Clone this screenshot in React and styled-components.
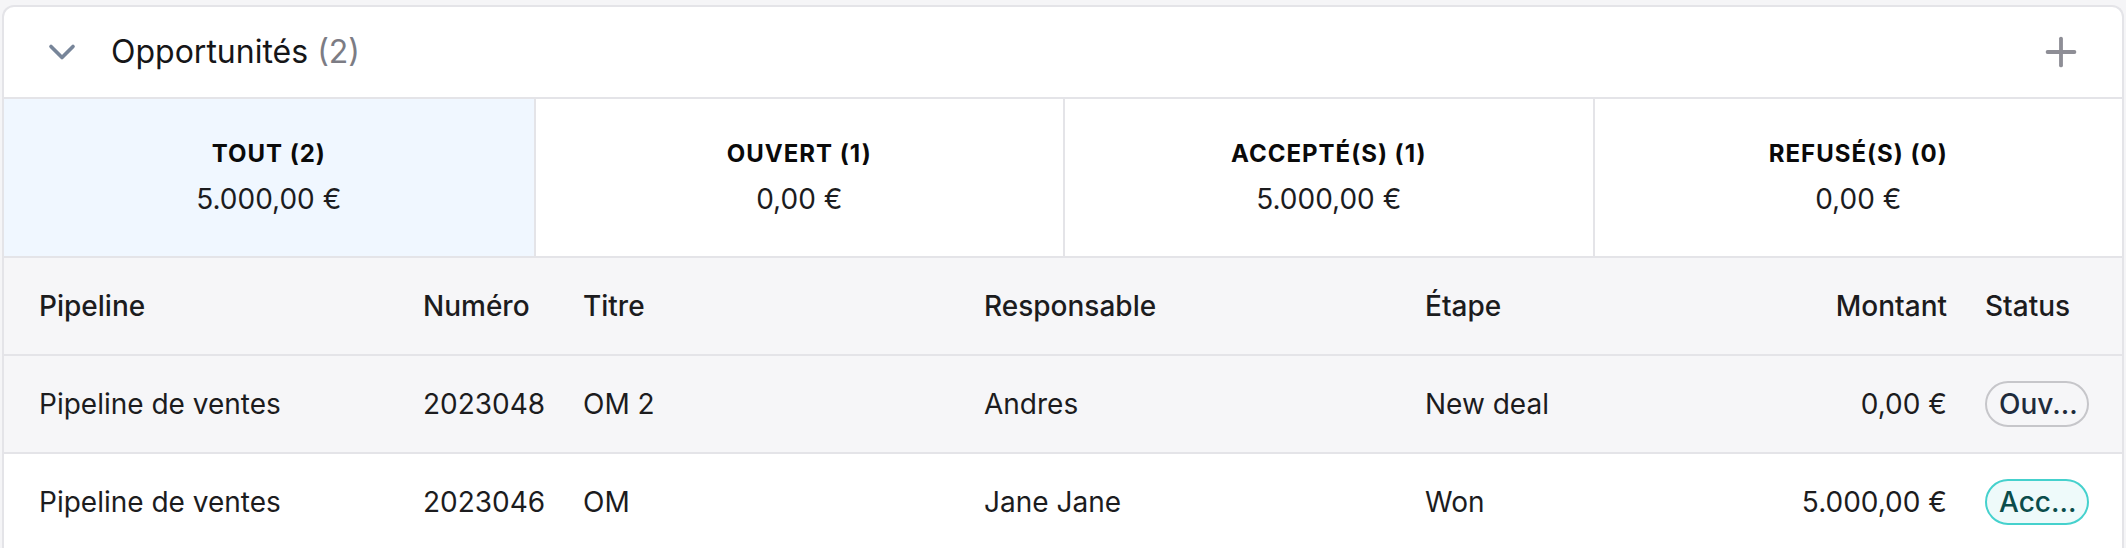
import styled, { createGlobalStyle } from 'styled-components';
import { ChevronDown, Plus } from 'lucide-react';

const GlobalStyle = createGlobalStyle`
  html, body {
    margin: 0;
    padding: 0;
    background: #f5f5f7;
    font-family: Inter, "Noto Sans", sans-serif;
    color: #1c1c1e;
    overflow: hidden;
  }
  #root {
    padding: 5px 2px 0 2px;
  }
`;

const Card = styled.section`
  background: #ffffff;
  border: 2px solid #e4e4e8;
  border-bottom: none;
  border-radius: 12px 12px 0 0;
  overflow: hidden;
`;

const Header = styled.header`
  display: flex;
  align-items: center;
  height: 90px;
  padding: 0 38px 0 36px;
  border-bottom: 2px solid #e4e4e8;
`;

const Toggle = styled.button`
  display: flex;
  align-items: center;
  justify-content: center;
  padding: 0;
  border: none;
  background: none;
  color: #778599;
  cursor: pointer;
`;

const Title = styled.h2`
  flex: 1;
  margin: 0 0 0 27px;
  font-size: 32px;
  font-weight: 400;
  line-height: 40px;
  color: #161618;
`;

const Count = styled.span`
  color: #7c7c84;
`;

const AddButton = styled.button`
  display: flex;
  padding: 0;
  border: none;
  background: none;
  color: #8e8e96;
  cursor: pointer;
`;

const Stats = styled.div`
  display: grid;
  grid-template-columns: repeat(4, 1fr);
  border-bottom: 2px solid #e4e4e8;
`;

const Stat = styled.div`
  display: flex;
  flex-direction: column;
  align-items: center;
  justify-content: center;
  gap: 11px;
  height: 157px;
  background: ${(p) => (p.$active ? '#f0f7ff' : '#ffffff')};
  & + & {
    border-left: 2px solid #e4e4e8;
  }
`;

const StatLabel = styled.div`
  font-size: 24px;
  font-weight: 700;
  line-height: 32px;
  letter-spacing: 1px;
  color: #0a0a0a;
`;

const StatValue = styled.div`
  font-size: 28px;
  line-height: 36px;
  color: #1c1c1e;
`;

const Row = styled.div`
  display: grid;
  grid-template-columns: 384px 160px 401px 441px 1fr 260px 137px;
  align-items: center;
  height: 96px;
  padding-left: 35px;
  background: ${(p) => (p.$muted ? '#f6f6f8' : '#ffffff')};
  border-bottom: 2px solid #e4e4e8;
  font-size: 28px;
  line-height: 36px;
  font-weight: ${(p) => (p.$head ? 500 : 400)};
  color: #1c1c1e;
`;

const Cell = styled.div`
  white-space: nowrap;
  text-align: ${(p) => (p.$right ? 'right' : 'left')};
  padding-right: ${(p) => (p.$right ? '38px' : '0')};
`;

const Badge = styled.span`
  display: inline-flex;
  align-items: center;
  box-sizing: border-box;
  width: 104px;
  height: 46px;
  padding: 0 12px;
  border-radius: 23px;
  border: 2px solid ${(p) => (p.$tone === 'won' ? '#45d1cd' : '#c6c6ca')};
  background: ${(p) => (p.$tone === 'won' ? '#eefafa' : 'transparent')};
  color: ${(p) => (p.$tone === 'won' ? '#0b4d4b' : '#1e2b3c')};
  font-size: 28px;
  font-weight: 500;
  white-space: nowrap;
  vertical-align: middle;
`;

const stats = [
  { label: 'TOUT (2)', value: '5.000,00 €', active: true },
  { label: 'OUVERT (1)', value: '0,00 €' },
  { label: 'ACCEPTÉ(S) (1)', value: '5.000,00 €' },
  { label: 'REFUSÉ(S) (0)', value: '0,00 €' },
];

const deals = [
  {
    pipeline: 'Pipeline de ventes',
    number: '2023048',
    title: 'OM 2',
    owner: 'Andres',
    stage: 'New deal',
    amount: '0,00 €',
    status: 'Ouv...',
    tone: 'open',
  },
  {
    pipeline: 'Pipeline de ventes',
    number: '2023046',
    title: 'OM',
    owner: 'Jane Jane',
    stage: 'Won',
    amount: '5.000,00 €',
    status: 'Acc...',
    tone: 'won',
  },
];

export default function App() {
  return (
    <>
      <GlobalStyle />
      <Card>
        <Header>
          <Toggle aria-label="Replier">
            <ChevronDown size={44} strokeWidth={2} />
          </Toggle>
          <Title>
            Opportunités <Count>(2)</Count>
          </Title>
          <AddButton aria-label="Ajouter">
            <Plus size={46} strokeWidth={2} />
          </AddButton>
        </Header>

        <Stats>
          {stats.map((s) => (
            <Stat key={s.label} $active={s.active}>
              <StatLabel>{s.label}</StatLabel>
              <StatValue>{s.value}</StatValue>
            </Stat>
          ))}
        </Stats>

        <Row $head $muted>
          <Cell>Pipeline</Cell>
          <Cell>Numéro</Cell>
          <Cell>Titre</Cell>
          <Cell>Responsable</Cell>
          <Cell>Étape</Cell>
          <Cell $right>Montant</Cell>
          <Cell>Status</Cell>
        </Row>
        {deals.map((d, i) => (
          <Row key={d.number} $muted={i === 0}>
            <Cell>{d.pipeline}</Cell>
            <Cell>{d.number}</Cell>
            <Cell>{d.title}</Cell>
            <Cell>{d.owner}</Cell>
            <Cell>{d.stage}</Cell>
            <Cell $right>{d.amount}</Cell>
            <Cell>
              <Badge $tone={d.tone}>{d.status}</Badge>
            </Cell>
          </Row>
        ))}
      </Card>
    </>
  );
}
